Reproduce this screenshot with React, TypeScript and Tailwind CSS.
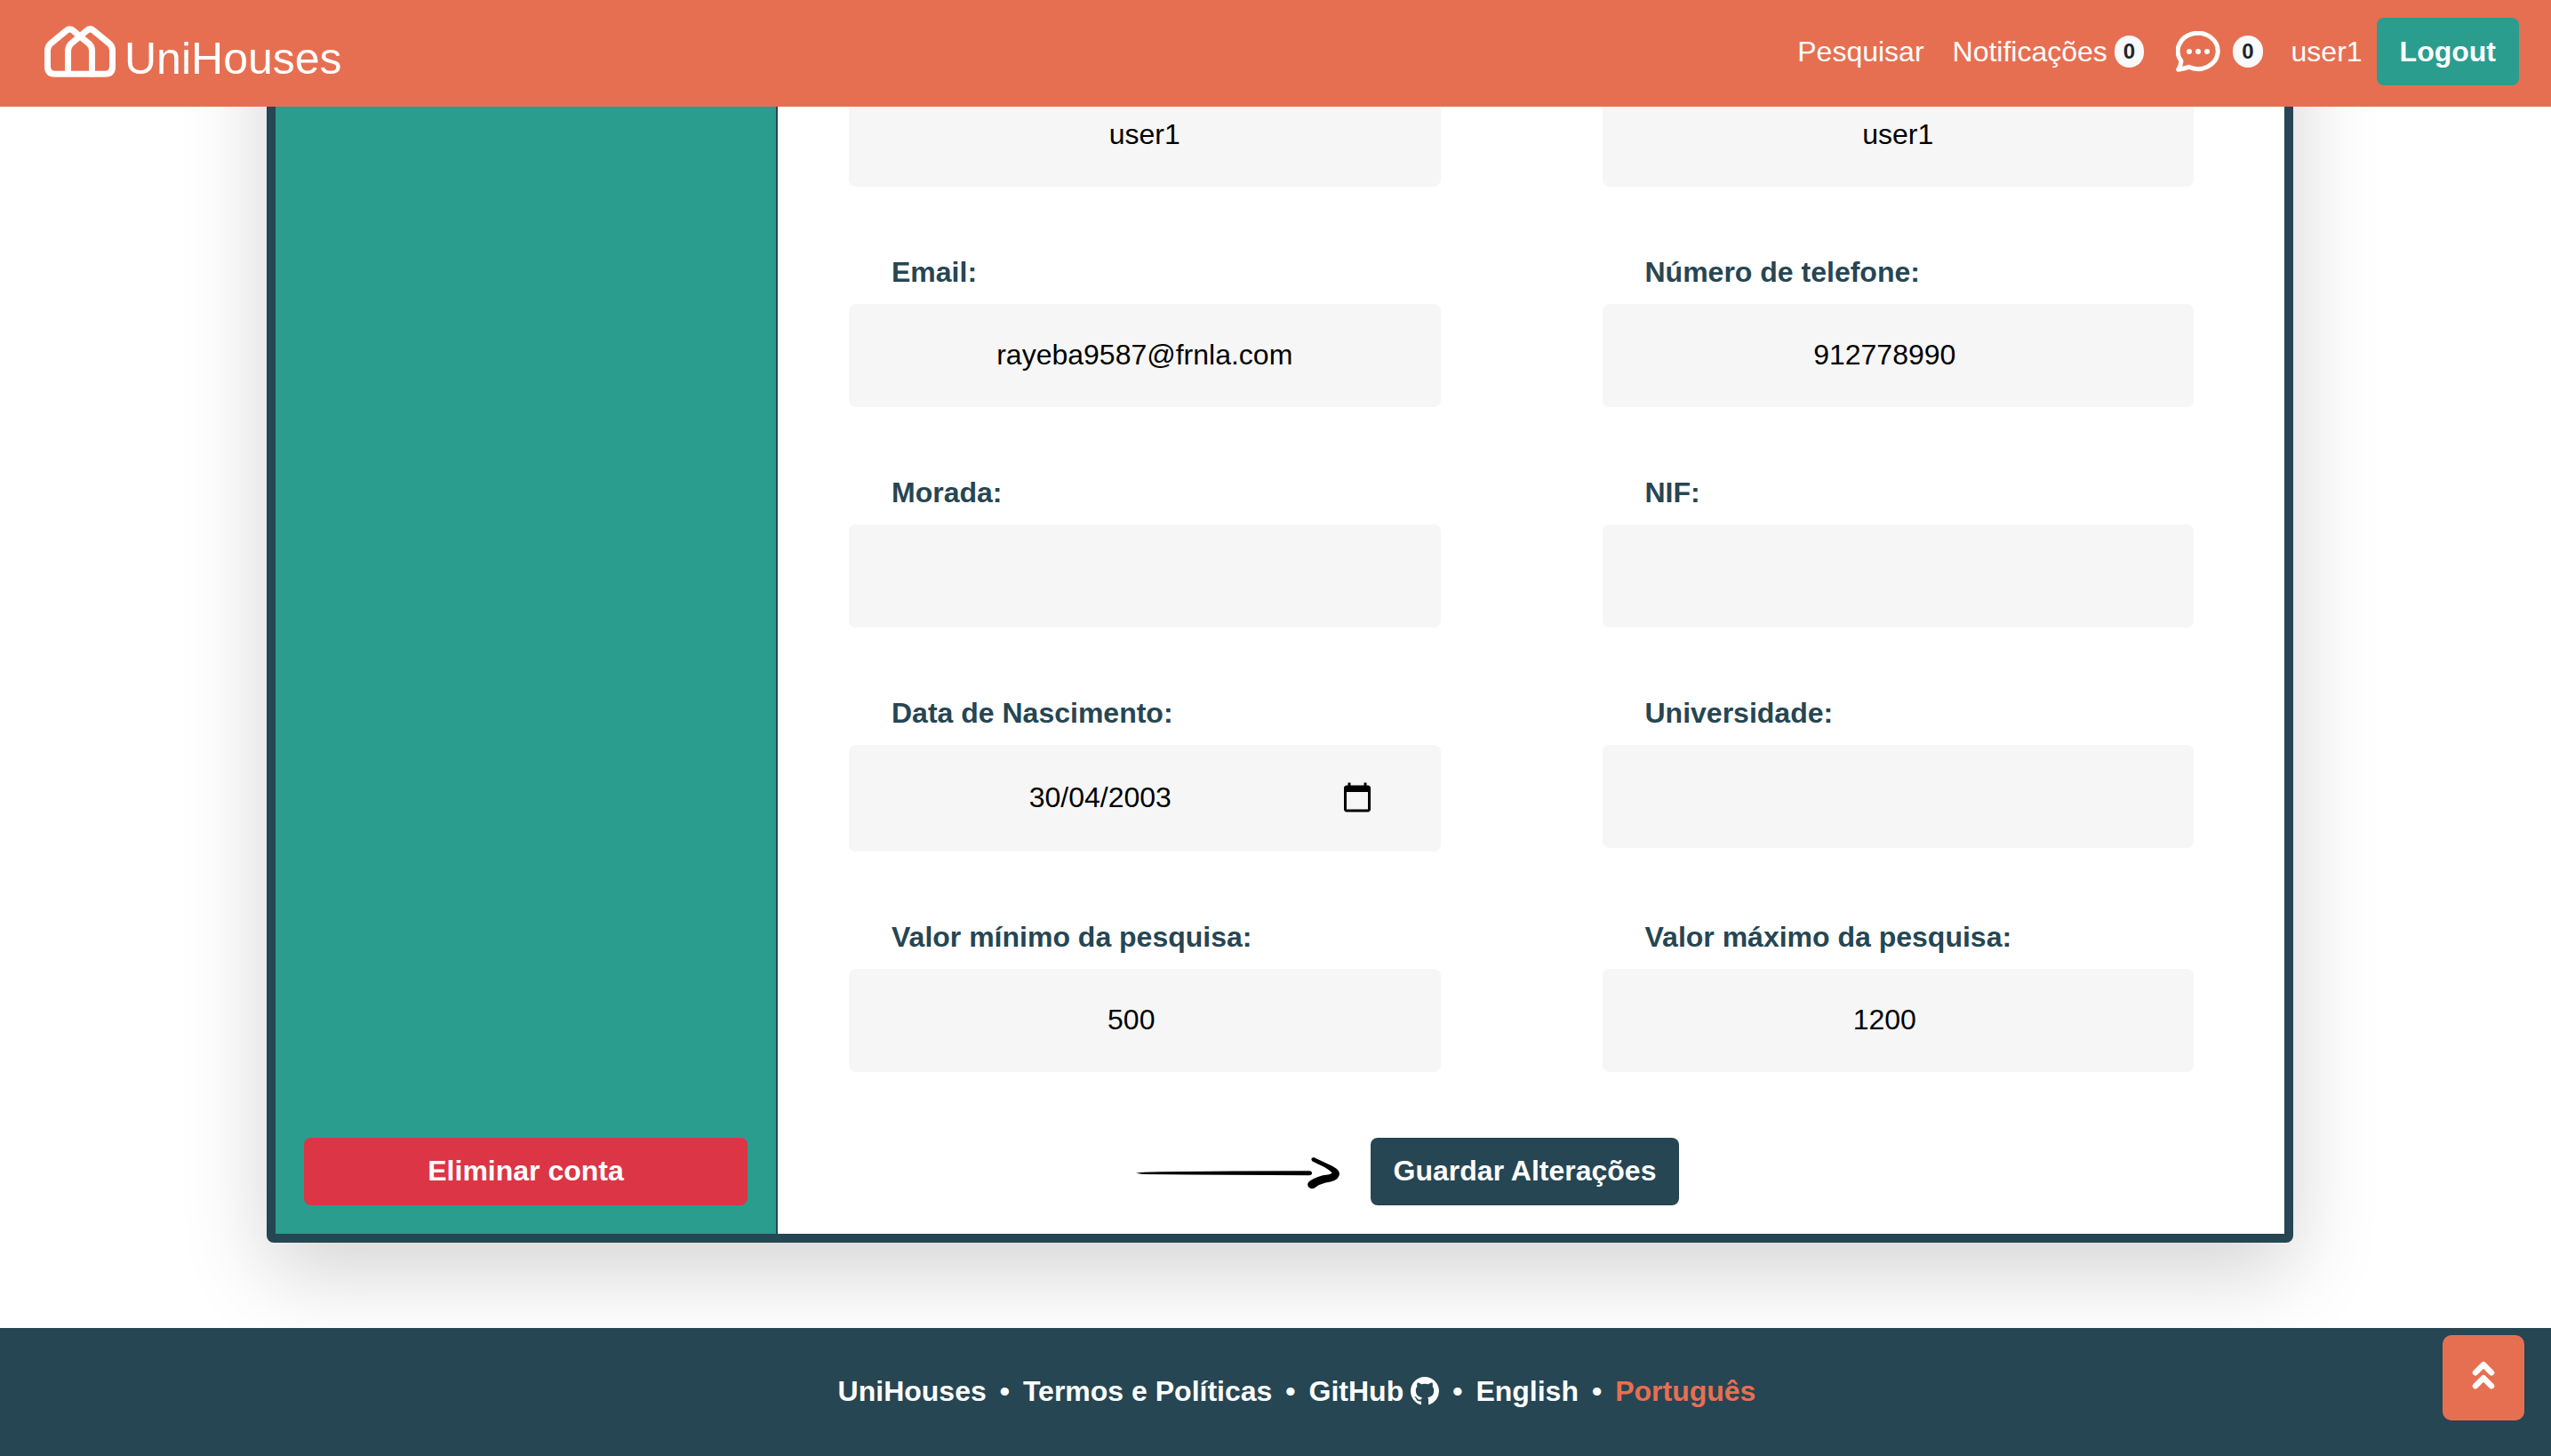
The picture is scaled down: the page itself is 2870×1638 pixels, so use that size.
import React from "react";
import { BsGithub } from "react-icons/bs";

type FieldProps = {
  id: string;
  label?: string;
  name?: string;
  value: string;
  type?: string;
};

const boxClass = "rounded-lg bg-[#f6f6f6]";

function Label({ id, text }: { id: string; text: string }) {
  return (
    <label htmlFor={id} className="mb-4 block pl-12 font-bold leading-10 text-[#264653]">
      {text}
    </label>
  );
}

function Field({ id, label, name, value, type = "text" }: FieldProps) {
  return (
    <div>
      {label && <Label id={id} text={label} />}
      <input
        id={id}
        type={type}
        aria-label={label ? undefined : name}
        defaultValue={value}
        className={
          type === "number"
            ? boxClass +
              " block h-[116px] w-full pb-[2px] pl-12 pr-[78px] text-center text-black outline-none [&::-webkit-inner-spin-button]:appearance-none"
            : boxClass + " block h-[116px] w-full px-12 pb-[2px] text-center text-black outline-none"
        }
      />
    </div>
  );
}

function DateField({ id, label, value }: { id: string; label: string; value: string }) {
  return (
    <div>
      <Label id={id} text={label} />
      <div className={boxClass + " flex h-[120px] items-center pb-[2px] pl-12 pr-[76px]"}>
        <input
          id={id}
          type="text"
          defaultValue={value}
          className="min-w-0 flex-1 bg-transparent text-center text-black outline-none"
        />
        <button type="button" aria-label="Abrir calendário" className="ml-9">
          <svg viewBox="0 0 24 24" className="block size-9" fill="black">
            <path d="M20 3h-1V1h-2v2H7V1H5v2H4c-1.1 0-2 .9-2 2v16c0 1.1.9 2 2 2h16c1.1 0 2-.9 2-2V5c0-1.1-.9-2-2-2zm0 18H4V8h16v13z" />
          </svg>
        </button>
      </div>
    </div>
  );
}

function HouseLogo() {
  return (
    <svg
      viewBox="0 0 80 58"
      className="h-[58px] w-20"
      fill="none"
      stroke="white"
      strokeWidth="7"
      strokeLinejoin="round"
      strokeLinecap="round"
    >
      <path d="M40 12 L33 6 Q28.500 1.500 24 6 L7 20 Q3.500 23 3.500 28 V46 Q3.500 54.300 12 54.300 H68 Q76.500 54.300 76.500 46 V28 Q76.500 23 73 20 L56 6 Q51.500 1.500 47 6 L30 20 Q27 23 26.500 28 V54" />
      <path d="M40 12 L50 20 Q53.500 23 53.500 28 V54" />
    </svg>
  );
}

function ChatIcon() {
  return (
    <svg viewBox="0 0 150 138" className="h-[46px] w-[50px]" fill="white">
      <path
        d="M18 101 A67.500 60.500 0 1 1 43 121 Q30 126 8 130 Q17 115 18 101 Z"
        fill="none"
        stroke="white"
        strokeWidth="15"
        strokeLinejoin="round"
      />
      <circle cx="45" cy="69" r="9" />
      <circle cx="75" cy="69" r="9" />
      <circle cx="105" cy="69" r="9" />
    </svg>
  );
}

function HandArrow() {
  return (
    <svg viewBox="0 0 230 36" className="h-9 w-[230px]">
      <path d="M0 17.700 Q4 16.500 30 16.200 L110 15.600 L195 15.200 Q198 15.500 198 17.700 Q198 20 195 20.300 L60 19.500 L8 18.900 Z" />
      <path d="M200 0 L216 7.500 Q229 13 229 18 Q229 25 219 27.500 Q207 29.500 203 33 Q199 36.500 195.500 34.500 Q191 31 195 27 Q204 20.500 216 19.500 Q220.500 18.500 220.500 17.500 Q219 15 212 11 L198.500 4.500 Q195.500 1 200 0 Z" />
    </svg>
  );
}

function DoubleChevronUp() {
  return (
    <svg
      viewBox="0 0 26 32"
      className="h-8 w-[26px]"
      fill="none"
      stroke="white"
      strokeWidth="6.500"
      strokeLinecap="round"
      strokeLinejoin="round"
    >
      <path d="M4 13.200 L13 4.200 L22 13.200" />
      <path d="M4 28.200 L13 19.200 L22 28.200" />
    </svg>
  );
}

function Badge({ children }: { children: React.ReactNode }) {
  return (
    <span className="flex h-9 items-center rounded-full bg-[#f8f9fa] px-[10px] text-2xl font-bold leading-none text-[#212529]">
      {children}
    </span>
  );
}

function Dot() {
  return <span aria-hidden="true">•</span>;
}

export default function App() {
  return (
    <div className="flex min-h-screen flex-col bg-white font-['Liberation_Sans',Arial,sans-serif] text-[32px] leading-10">
      <header className="fixed inset-x-0 top-0 z-10 flex items-center justify-between bg-[#e76f51] pb-6 pl-[50px] pr-9 pt-5 text-white">
        <a href="#" className="flex items-center gap-[10px]">
          <HouseLogo />
          <span className="pt-4 text-[50px] leading-[52px]">UniHouses</span>
        </a>
        <nav className="flex items-center">
          <a href="#">Pesquisar</a>
          <a href="#" className="ml-8 flex items-center gap-2">
            Notificações
            <Badge>0</Badge>
          </a>
          <a href="#" aria-label="Mensagens" className="ml-9 flex items-center gap-[14px]">
            <ChatIcon />
            <Badge>0</Badge>
          </a>
          <a href="#" className="ml-8">
            user1
          </a>
          <button type="button" className="ml-4 h-[76px] rounded-lg bg-[#2a9d8f] px-[26px] font-bold">
            Logout
          </button>
        </nav>
      </header>

      <main className="-mt-40 flex-1 pb-24 pl-[300px] pr-[290px]">
        <div className="flex rounded-lg border-[10px] border-[#264653] bg-white shadow-[0_32px_96px_rgba(0,0,0,0.175)]">
          <aside className="flex w-1/4 items-end border-r-2 border-[#264653] bg-[#2a9d8f] p-8">
            <button type="button" className="h-[76px] w-full rounded-lg bg-[#dc3545] pb-[2px] font-bold text-white">
              Eliminar conta
            </button>
          </aside>
          <form className="flex-1 pb-8 pl-20 pr-[102px] pt-[244px]">
            <div className="grid grid-cols-2 gap-x-[182px] gap-y-[76px]">
              <Field id="first" name="Nome" value="user1" />
              <Field id="last" name="Apelido" value="user1" />
              <Field id="email" label="Email:" type="email" value="rayeba9587@frnla.com" />
              <Field id="phone" label="Número de telefone:" type="number" value="912778990" />
              <Field id="address" label="Morada:" value="" />
              <Field id="nif" label="NIF:" value="" />
              <DateField id="birth" label="Data de Nascimento:" value="30/04/2003" />
              <Field id="university" label="Universidade:" value="" />
              <Field id="min" label="Valor mínimo da pesquisa:" type="number" value="500" />
              <Field id="max" label="Valor máximo da pesquisa:" type="number" value="1200" />
            </div>
            <div className="flex items-center pl-2 pt-[74px]">
              <div className="flex flex-1 justify-end px-[34px] pt-1">
                <HandArrow />
              </div>
              <button type="button" className="h-[76px] rounded-lg bg-[#264653] px-[26px] pb-[2px] font-bold text-white">
                Guardar Alterações
              </button>
              <div className="flex-1 px-[34px]" />
            </div>
          </form>
        </div>
      </main>

      <footer className="flex h-36 items-center justify-center gap-[15px] bg-[#264653] pb-[2px] pl-12 font-bold text-white">
        <a href="#">UniHouses</a>
        <Dot />
        <a href="#">Termos e Políticas</a>
        <Dot />
        <a href="#" className="flex items-center gap-2">
          GitHub
          <BsGithub className="size-8" />
        </a>
        <Dot />
        <a href="#">English</a>
        <Dot />
        <a href="#" className="text-[#e76f51]">
          Português
        </a>
      </footer>

      <button
        type="button"
        aria-label="Voltar ao topo"
        className="fixed bottom-10 right-[30px] z-10 flex h-24 w-[92px] items-center justify-center rounded-[10px] bg-[#e76f51] pb-1.5 text-white"
      >
        <DoubleChevronUp />
      </button>
    </div>
  );
}
